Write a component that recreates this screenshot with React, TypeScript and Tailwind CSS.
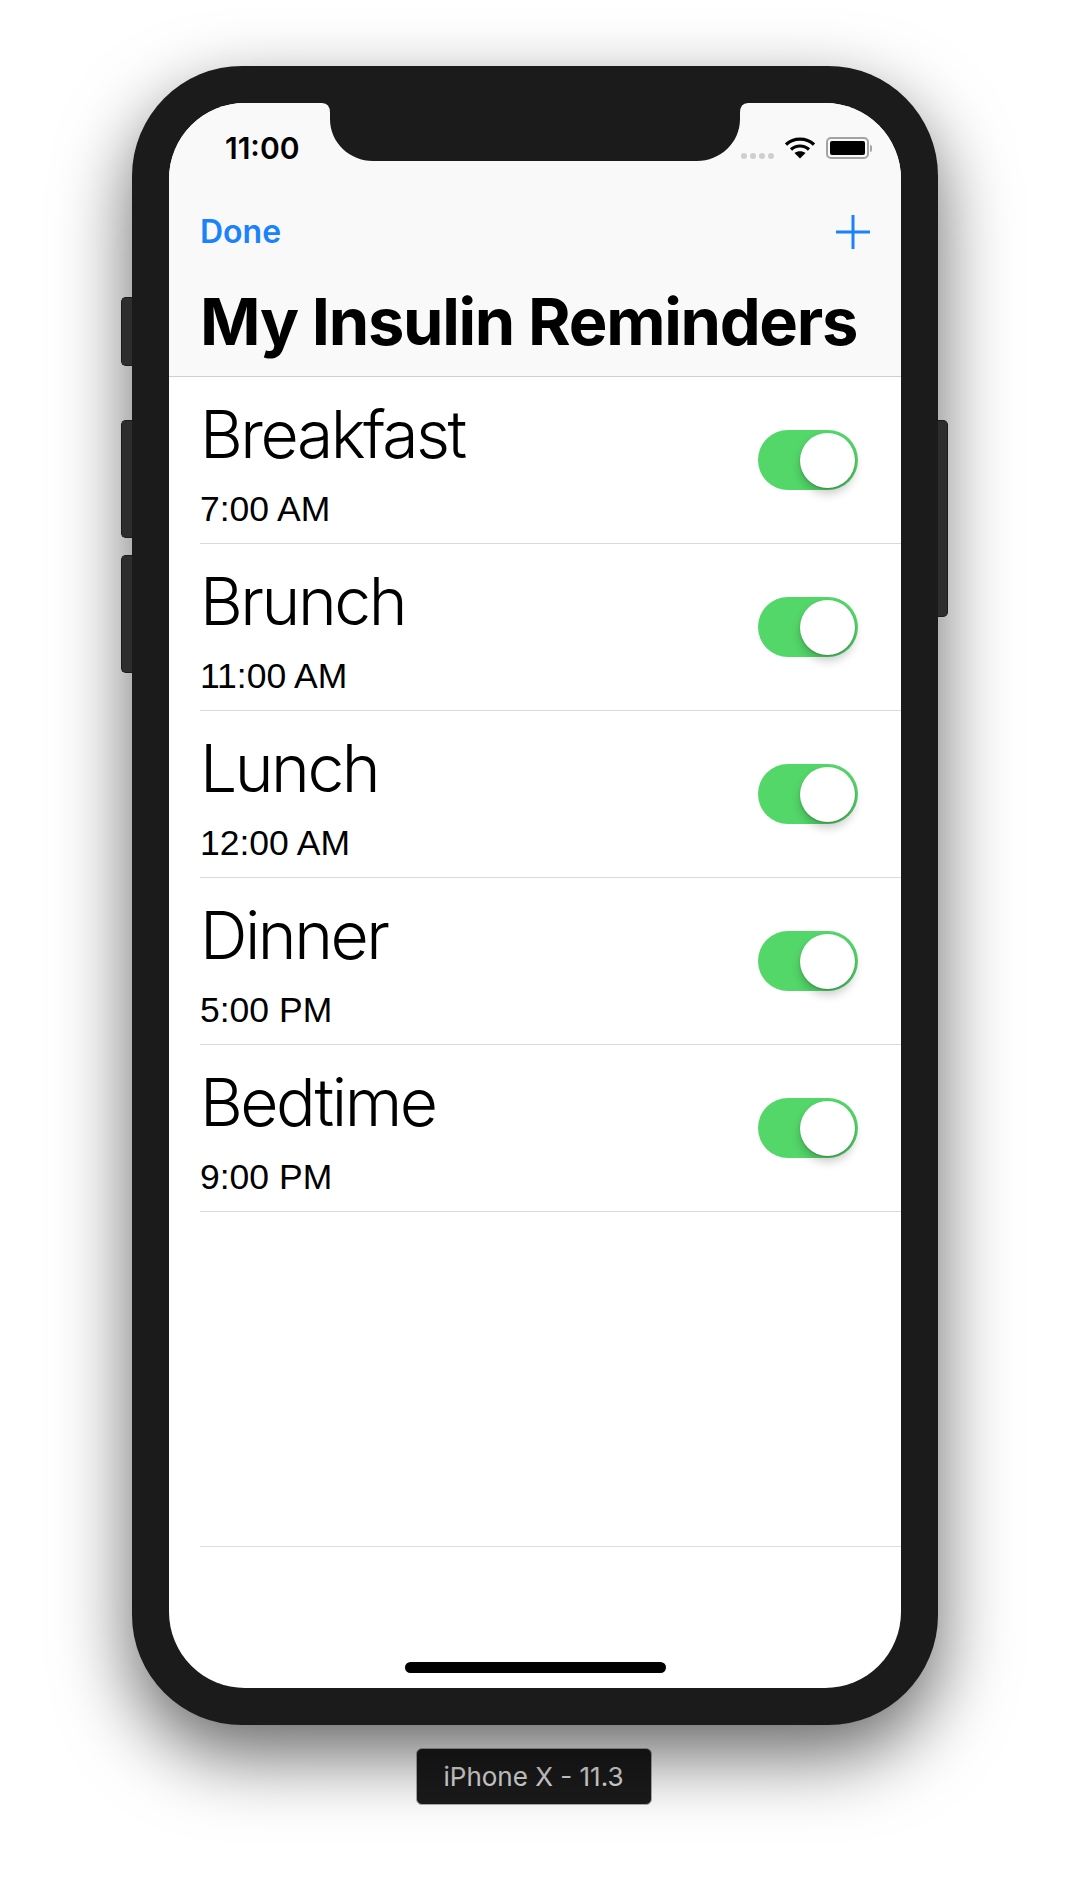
const REMINDERS = [
  { name: 'Breakfast', time: '7:00 AM' },
  { name: 'Brunch', time: '11:00 AM' },
  { name: 'Lunch', time: '12:00 AM' },
  { name: 'Dinner', time: '5:00 PM' },
  { name: 'Bedtime', time: '9:00 PM' },
];

function Toggle() {
  return (
    <div className="relative h-[60px] w-[100px] shrink-0 rounded-full bg-[#53d769]">
      <div className="absolute right-[3px] top-[3px] h-[55px] w-[55px] rounded-full bg-white shadow-[0_6px_10px_rgba(0,0,0,0.2),0_1px_2px_rgba(0,0,0,0.2)]" />
    </div>
  );
}

function Row({ name, time }: { name: string; time: string }) {
  return (
    <div className="ml-[31px] flex h-[167px] items-center justify-between border-b border-[#d9d9d9] pr-[43px]">
      <div className="flex flex-col pt-[6px]">
        <span className="font-['Inter'] text-[66px] font-light leading-[72px] tracking-[-2.5px] text-black">{name}</span>
        <span className="mt-[19px] font-['Liberation_Sans'] text-[35.5px] leading-[40px] text-black">{time}</span>
      </div>
      <Toggle />
    </div>
  );
}

function Wifi() {
  return (
    <svg width="30" height="22" viewBox="0 0 30 22" fill="none">
      <path d="M1 7.5C8.8 0.2 21.2 0.2 29 7.5" stroke="black" strokeWidth="3.2" />
      <path d="M6 12.5C11 7.8 19 7.8 24 12.5" stroke="black" strokeWidth="3.2" />
      <path d="M15 21.5L9.5 16C12.5 13.6 17.5 13.6 20.5 16Z" fill="black" />
    </svg>
  );
}

function Battery() {
  return (
    <div className="flex items-center gap-[1px]">
      <div className="h-[22px] w-[43px] rounded-[5px] border-2 border-[#a3a3a3] p-[2px]">
        <div className="h-full w-full rounded-[2px] bg-black" />
      </div>
      <div className="h-[7px] w-[2px] rounded-r-sm bg-[#a3a3a3]" />
    </div>
  );
}

export default function App() {
  return (
    <div className="flex h-[1888px] w-[1070px] flex-col items-center overflow-hidden bg-white pt-[66px] font-['Inter']">
      <div className="relative h-[1659px] w-[806px] rounded-[110px] bg-[#1b1b1b] p-[37px] shadow-[0_30px_75px_rgba(0,0,0,0.6)]">
        {/* side buttons */}
        <div className="absolute left-[-11px] top-[231px] h-[69px] w-[11px] rounded-l-[5px] border border-r-0 border-[#1b1b1b] bg-[#2d2d2d]" />
        <div className="absolute left-[-11px] top-[354px] h-[118px] w-[11px] rounded-l-[5px] border border-r-0 border-[#1b1b1b] bg-[#2d2d2d]" />
        <div className="absolute left-[-11px] top-[489px] h-[118px] w-[11px] rounded-l-[5px] border border-r-0 border-[#1b1b1b] bg-[#2d2d2d]" />
        <div className="absolute right-[-10px] top-[354px] h-[197px] w-[10px] rounded-r-[5px] border border-l-0 border-[#1b1b1b] bg-[#2d2d2d]" />

        <div className="relative flex h-full w-full flex-col overflow-hidden rounded-[76px] bg-white">
          {/* notch */}
          <svg className="absolute left-[153px] top-0" width="426" height="58" viewBox="0 0 426 58">
            <path
              d="M0 0H426Q418 0 418 10V16C418 40 398 58 375 58H51C28 58 8 40 8 16V10Q8 0 0 0Z"
              fill="#1b1b1b"
            />
          </svg>

          <div className="flex h-[274px] shrink-0 flex-col border-b border-[#cfcfcf] bg-[#f9f9f9]">
            <div className="flex h-[58px] items-start justify-between pl-[56px] pr-[29px] pt-[22px]">
              <span className="text-[30px] font-semibold leading-[46px] text-black">11:00</span>
              <div className="flex items-center gap-[11px] pt-[12px]">
                <div className="mt-[16px] flex gap-[3px]">
                  {[0, 1, 2, 3].map((d) => (
                    <div key={d} className="h-[6px] w-[6px] rounded-full bg-[#cfcfcf]" />
                  ))}
                </div>
                <Wifi />
                <Battery />
              </div>
            </div>
            <div className="mt-[53px] flex items-center justify-between pl-[31px] pr-[31px]">
              <span className="text-[32px] font-semibold leading-[36px] text-[#1a82fb]">Done</span>
              <svg width="34" height="34" viewBox="0 0 34 34" fill="none">
                <path d="M17 0V34M0 17H34" stroke="#1a82fb" strokeWidth="3" />
              </svg>
            </div>
            <div className="mt-[36px] pl-[31px] text-[65px] font-bold leading-[72px] tracking-[-1.3px] text-black">
              My Insulin Reminders
            </div>
          </div>

          {REMINDERS.map((r) => (
            <Row key={r.name} name={r.name} time={r.time} />
          ))}

          <div className="ml-[31px] mt-[334px] border-b border-[#dedede]" />

          <div className="absolute bottom-[15px] left-[236px] h-[11px] w-[261px] rounded-full bg-black" />
        </div>
      </div>

      <div className="mr-[3px] mt-[23px] flex h-[57px] w-[236px] items-center justify-center rounded-[6px] border border-[#b0b0b0] bg-[#1b1b1b] text-[26px] text-[#e0e0e0]">
        iPhone X - 11.3
      </div>
    </div>
  );
}
